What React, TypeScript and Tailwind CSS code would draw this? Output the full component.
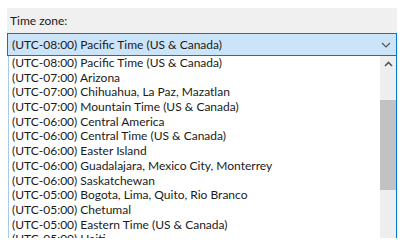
const ZONES = [
  "(UTC-08:00) Pacific Time (US & Canada)",
  "(UTC-07:00) Arizona",
  "(UTC-07:00) Chihuahua, La Paz, Mazatlan",
  "(UTC-07:00) Mountain Time (US & Canada)",
  "(UTC-06:00) Central America",
  "(UTC-06:00) Central Time (US & Canada)",
  "(UTC-06:00) Easter Island",
  "(UTC-06:00) Guadalajara, Mexico City, Monterrey",
  "(UTC-06:00) Saskatchewan",
  "(UTC-05:00) Bogota, Lima, Quito, Rio Branco",
  "(UTC-05:00) Chetumal",
  "(UTC-05:00) Eastern Time (US & Canada)",
  "(UTC-05:00) Haiti",
];

export default function App() {
  return (
    <div
      className="relative h-[251px] w-[406px] overflow-hidden bg-white text-[12px] text-[#1a1a1a]"
      style={{ fontFamily: "Lato, 'Noto Sans', sans-serif" }}
    >
      <div className="ml-[7px] mt-[8px] h-[48px] w-[390px] bg-[#f0f0f0]">
        <div className="px-[3px] pt-[6px] leading-[14px]">Time zone:</div>
        <div className="mt-[5px] flex h-[23px] items-center justify-between border border-[#0078d7] bg-[#cce4f7] pl-[4px] pr-[5px]">
          <span>(UTC-08:00) Pacific Time (US &amp; Canada)</span>
          <svg width="10" height="6" viewBox="0 0 10 6" fill="none">
            <path d="M1 1l4 4 4-4" stroke="#555" strokeWidth="1.2" />
          </svg>
        </div>
      </div>

      {/* dropdown list */}
      <div className="absolute left-[8px] top-[56px] flex h-[182px] w-[389px] overflow-hidden border-x border-l-[#a9c8e6] border-r-[#0078d7] bg-white">
        <div className="flex-1 pl-[3px]">
          {ZONES.map((z) => (
            <div key={z} className="h-[14.7px] whitespace-nowrap leading-[14.7px]">
              {z}
            </div>
          ))}
        </div>
        <div className="flex w-[16px] flex-col bg-[#eeeeee]">
          <div className="flex h-[15px] items-center justify-center">
            <svg width="9" height="6" viewBox="0 0 9 6" fill="none">
              <path d="M1 5l3.5-3.5L8 5" stroke="#555" strokeWidth="1.6" />
            </svg>
          </div>
          <div className="mt-[29px] h-[90px] bg-[#c2c2c2]" />
        </div>
      </div>
    </div>
  );
}
